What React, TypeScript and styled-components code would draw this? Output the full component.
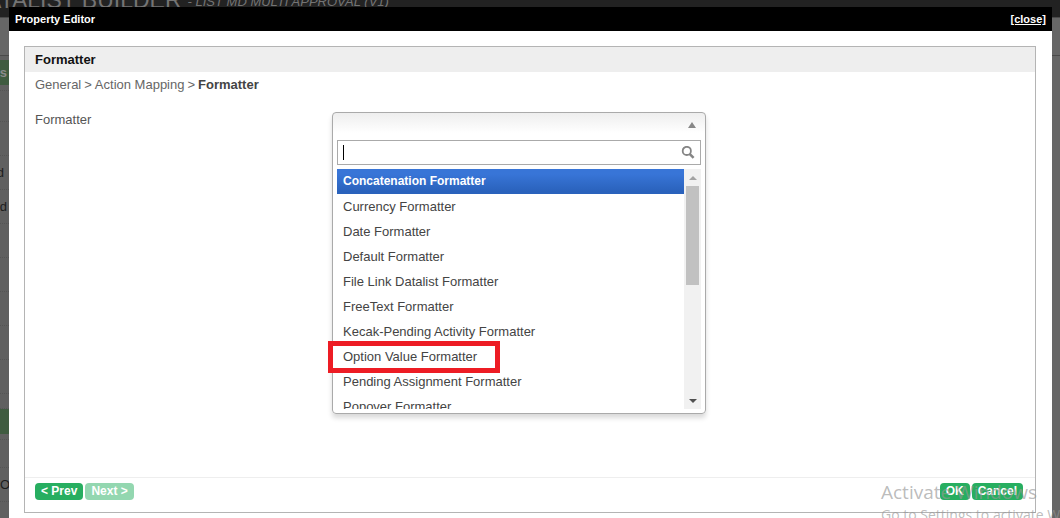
import React from "react";
import styled, { createGlobalStyle, css } from "styled-components";

const GlobalStyle = createGlobalStyle`
  * { box-sizing: border-box; }
  body {
    margin: 0;
    background: #666;
    color: #555;
    font: 13px/16px "Liberation Sans", Arial, sans-serif;
    overflow: hidden;
  }
`;

const Page = styled.div`
  position: relative;
  min-height: 100vh;
  overflow: hidden;
`;

const Backdrop = styled.div`
  position: absolute;
  inset: 0;
  overflow: hidden;
`;

const BuilderHeader = styled.header`
  display: flex;
  align-items: flex-end;
  gap: 6px;
  height: 18px;
  padding-bottom: 6px;
  background: #222;
  border-bottom: 1px solid #4a4a4a;
  color: #747474;
  white-space: nowrap;
`;

const BuilderTitle = styled.span`
  margin-left: -14px;
  font-size: 23px;
  line-height: 22px;
`;

const BuilderSubtitle = styled.em`
  font-size: 13px;
  line-height: 18px;
`;

const BuilderToolbar = styled.div`
  height: 38px;
  border-bottom: 1px solid #4a4a4a;
`;

const BuilderSidebar = styled.div`
  width: 9px;
  padding-top: 4px;
  background: #606060;
`;

const SideRow = styled.div<{ $h: number; $green?: boolean; $start?: boolean; $end?: number }>`
  display: flex;
  align-items: center;
  justify-content: ${(p) => (p.$start ? "flex-start" : "flex-end")};
  height: ${(p) => p.$h}px;
  padding-right: ${(p) => p.$end || 0}px;
  overflow: hidden;
  color: #1c1c1c;
  ${(p) =>
    p.$green
      ? css`
          background: #3f5b40;
          color: #8a8a8a;
          font-weight: bold;
        `
      : css`
          border-bottom: 1px dotted #555;
        `}
`;

const Dialog = styled.section`
  position: relative;
  display: flex;
  flex-direction: column;
  min-height: calc(100vh - 7px);
  margin: 7px 8px 0 9px;
  background: #fff;
`;

const DialogHeader = styled.header`
  display: flex;
  justify-content: space-between;
  height: 24px;
  padding: 0 6px;
  background: #000;
  color: #fff;
  font-size: 11px;
  font-weight: bold;
  line-height: 24px;
`;

const DialogTitle = styled.h1`
  margin: 0;
  font-size: 11px;
`;

const CloseLink = styled.a`
  color: #fff;
`;

const Panel = styled.div`
  display: flex;
  flex: 1;
  flex-direction: column;
  margin: 15px 16px 5px 15px;
  border: 1px solid #b4b4b4;
`;

const PanelTitle = styled.h2`
  margin: 0;
  padding: 0 10px;
  background: #eee;
  color: #111;
  font-size: 13px;
  line-height: 25px;
`;

const Breadcrumb = styled.nav`
  display: flex;
  gap: 3px;
  padding: 5px 10px 3px;
  color: #666;

  b {
    color: #444;
  }
`;

const FieldRow = styled.div`
  display: grid;
  grid-template-columns: 297px 374px;
  flex: 1;
  align-items: start;
  padding: 16px 10px;
`;

const FieldLabel = styled.label`
  line-height: 16px;
`;

const Combo = styled.div`
  padding: 0 4px 4px;
  border: 1px solid #aaa;
  border-radius: 4px;
  background: linear-gradient(#eee 0, #fff 20px);
  box-shadow: 0 4px 5px rgba(0, 0, 0, 0.15);
`;

const ComboToggle = styled.button`
  display: flex;
  align-items: center;
  justify-content: flex-end;
  width: 100%;
  height: 27px;
  padding: 0 5px 3px 0;
  border: 0;
  background: transparent;
`;

const SearchBox = styled.div`
  display: flex;
  align-items: center;
  height: 25px;
  padding: 0 5px;
  border: 1px solid #aaa;
  background: #fff;
`;

const Caret = styled.span`
  width: 1px;
  height: 15px;
  background: #000;
`;

const SearchInput = styled.input`
  flex: 1;
  min-width: 0;
  padding: 0;
  border: 0;
  outline: 0;
  background: transparent;
  font: inherit;
`;

const Results = styled.div`
  position: relative;
  display: grid;
  grid-template-columns: 1fr 17px;
  height: 240px;
  margin-top: 4px;
`;

const OptionList = styled.ul`
  height: 240px;
  margin: 0;
  padding: 0;
  overflow: hidden;
  list-style: none;
`;

const Option = styled.li<{ $active: boolean }>`
  height: 25px;
  padding: 0 6px;
  color: #444;
  line-height: 25px;
  ${(p) =>
    p.$active &&
    css`
      background: linear-gradient(#3875d7 20%, #2a62bc 90%);
      color: #fff;
      font-size: 12px;
      font-weight: bold;
    `}
`;

const Scrollbar = styled.div`
  display: flex;
  flex-direction: column;
  align-items: center;
  background: #f1f1f1;
`;

const ScrollArrow = styled.span`
  display: grid;
  place-items: center;
  width: 17px;
  height: 17px;
`;

const ScrollThumb = styled.div`
  width: 13px;
  height: 99px;
  margin-bottom: auto;
  background: #c1c1c1;
`;

const Highlight = styled.div`
  position: absolute;
  top: 172px;
  left: -9px;
  width: 172px;
  height: 32px;
  border: 5px solid #ed1c24;
`;

const PanelFooter = styled.footer`
  display: flex;
  justify-content: space-between;
  height: 35px;
  padding: 5px 12px 0 10px;
  border-top: 1px solid #eee;
`;

const ButtonGroup = styled.div`
  display: flex;
  gap: 2px;
`;

const Button = styled.button`
  height: 17px;
  padding: 0 6px;
  border: 0;
  border-radius: 4px;
  background: #27ae60;
  color: #fff;
  font: bold 12px/17px "Liberation Sans", Arial, sans-serif;

  &:disabled {
    background: #93d7b0;
  }
`;

const Watermark = styled.div`
  position: absolute;
  top: 481px;
  left: calc(100% - 179px);
  color: rgba(150, 150, 150, 0.65);
  font-family: "Open Sans", "Noto Sans", sans-serif;
  white-space: nowrap;
  pointer-events: none;
`;

const WatermarkTitle = styled.div`
  font-size: 19px;
  line-height: 22px;
`;

const WatermarkNote = styled.div`
  font-size: 14px;
  line-height: 24px;
`;

const sideRows = [
  { h: 25, text: "s", green: true, end: 2 },
  { h: 6 },
  { h: 31 },
  { h: 34 },
  { h: 34, text: "d", end: 5 },
  { h: 34, text: "d", end: 2 },
  { h: 34 },
  { h: 34 },
  { h: 34 },
  { h: 34 },
  { h: 34 },
  { h: 15 },
  { h: 25, green: true },
  { h: 6 },
  { h: 28 },
  { h: 34, text: "OF", start: true },
  { h: 46 },
];

const options = [
  "Concatenation Formatter",
  "Currency Formatter",
  "Date Formatter",
  "Default Formatter",
  "File Link Datalist Formatter",
  "FreeText Formatter",
  "Kecak-Pending Activity Formatter",
  "Option Value Formatter",
  "Pending Assignment Formatter",
  "Popover Formatter",
];

const UpTriangle = ({ color, height = 6 }: { color: string; height?: number }) => (
  <svg width="8" height={height} viewBox={`0 0 8 ${height}`} aria-hidden="true">
    <path d={`M0 ${height}h8L4 0z`} fill={color} />
  </svg>
);

const DownTriangle = ({ color }: { color: string }) => (
  <svg width="8" height="4" viewBox="0 0 8 4" aria-hidden="true">
    <path d="M0 0h8L4 4z" fill={color} />
  </svg>
);

export default function App() {
  return (
    <>
      <GlobalStyle />
      <Page>
        <Backdrop aria-hidden="true">
          <BuilderHeader>
            <BuilderTitle>ATALIST BUILDER</BuilderTitle>
            <BuilderSubtitle>- LIST MD MULTI APPROVAL (V1)</BuilderSubtitle>
          </BuilderHeader>
          <BuilderToolbar />
          <BuilderSidebar>
            {sideRows.map((r, i) => (
              <SideRow key={i} $h={r.h} $green={r.green} $start={r.start} $end={r.end}>
                {r.text}
              </SideRow>
            ))}
          </BuilderSidebar>
        </Backdrop>

        <Dialog role="dialog" aria-labelledby="dialog-title">
          <DialogHeader>
            <DialogTitle id="dialog-title">Property Editor</DialogTitle>
            <CloseLink href="#close">[close]</CloseLink>
          </DialogHeader>
          <Panel>
            <PanelTitle>Formatter</PanelTitle>
            <Breadcrumb>
              <span>General</span>
              <span>&gt;</span>
              <span>Action Mapping</span>
              <span>&gt;</span>
              <b>Formatter</b>
            </Breadcrumb>
            <FieldRow>
              <FieldLabel htmlFor="formatter-search">Formatter</FieldLabel>
              <Combo>
                <ComboToggle type="button" aria-label="Toggle formatter list">
                  <UpTriangle color="#888" />
                </ComboToggle>
                <SearchBox>
                  <Caret />
                  <SearchInput id="formatter-search" type="text" autoComplete="off" />
                  <svg width="14" height="14" viewBox="0 0 14 14" fill="none" stroke="#858585" aria-hidden="true">
                    <circle cx="5.8" cy="4.9" r="4.1" strokeWidth="1.8" />
                    <path d="M8.6 7.9l4 4" strokeWidth="2.6" />
                  </svg>
                </SearchBox>
                <Results>
                  <OptionList>
                    {options.map((o, i) => (
                      <Option key={o} $active={i === 0}>
                        {o}
                      </Option>
                    ))}
                  </OptionList>
                  <Scrollbar aria-hidden="true">
                    <ScrollArrow>
                      <UpTriangle color="#a3a3a3" height={4} />
                    </ScrollArrow>
                    <ScrollThumb />
                    <ScrollArrow>
                      <DownTriangle color="#505050" />
                    </ScrollArrow>
                  </Scrollbar>
                  <Highlight />
                </Results>
              </Combo>
            </FieldRow>
            <PanelFooter>
              <ButtonGroup>
                <Button type="button">&lt; Prev</Button>
                <Button type="button" disabled>
                  Next &gt;
                </Button>
              </ButtonGroup>
              <ButtonGroup>
                <Button type="button">OK</Button>
                <Button type="button">Cancel</Button>
              </ButtonGroup>
            </PanelFooter>
          </Panel>
        </Dialog>

        <Watermark aria-hidden="true">
          <WatermarkTitle>Activate Windows</WatermarkTitle>
          <WatermarkNote>Go to Settings to activate Windows.</WatermarkNote>
        </Watermark>
      </Page>
    </>
  );
}
